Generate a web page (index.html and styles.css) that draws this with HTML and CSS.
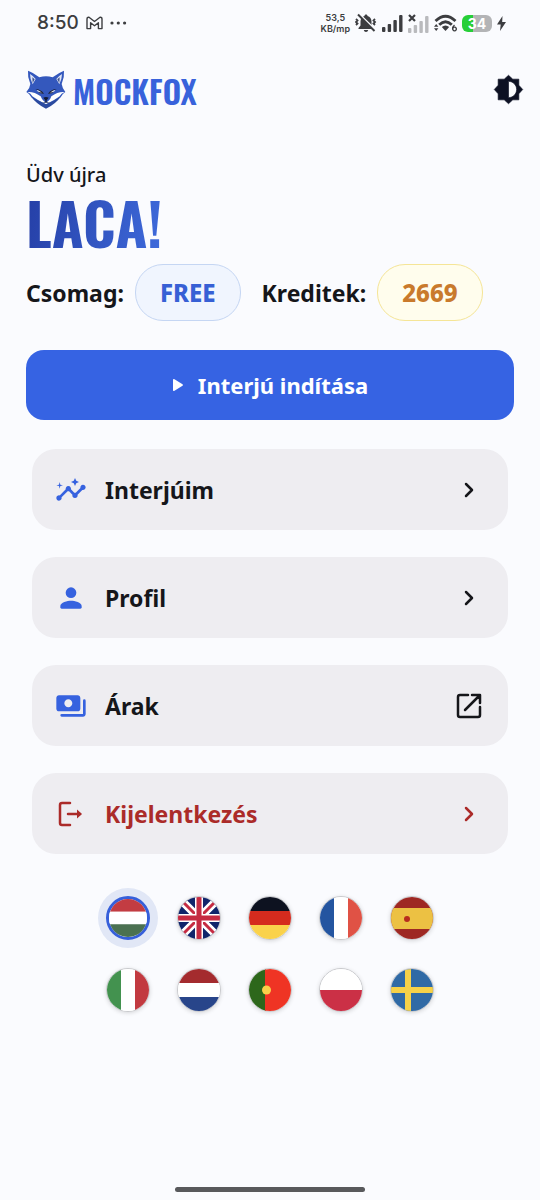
FILE: index.html
```html
<!DOCTYPE html>
<html lang="hu">
<head>
<meta charset="utf-8">
<meta name="viewport" content="width=device-width, initial-scale=1">
<title>Mockfox</title>
<link rel="stylesheet" href="styles.css">
</head>
<body>
<div class="screen">
  <div class="status">
    <div class="status-left">
      <span class="clock">8:50</span>
      <svg width="17" height="14" viewBox="0 0 17 14" fill="none" stroke="#3c3d40" stroke-width="1.4" stroke-linejoin="round"><path d="M1 12.600V3.200Q1 1 3 1.300L8.500 5.500 14 1.300Q16 1 16 3.200V12.600H12.400V6.700L8.500 9.700 4.600 6.700V12.600Z"/></svg>
      <svg width="17" height="4" viewBox="0 0 17 4" fill="#3c3d40"><circle cx="2" cy="2" r="1.600"/><circle cx="8.300" cy="2" r="1.600"/><circle cx="14.600" cy="2" r="1.600"/></svg>
    </div>
    <div class="status-right">
      <div class="speed"><span>53,5</span><span>KB/mp</span></div>
      <svg width="22" height="20" viewBox="0 0 22 20"><g fill="#3c3d40"><path d="M11 1.500c.9 0 1.500.6 1.500 1.400 2.600.8 4 2.800 4 5.600v4l2 2.600v1H3.500v-1l2-2.600v-4c0-2.800 1.400-4.800 4-5.600 0-.8.600-1.400 1.500-1.400zM8.800 17h4.400c-.3 1.300-1 2-2.200 2s-1.900-.7-2.200-2z"/></g><path d="M5 2 20.500 17" stroke="#fafbfe" stroke-width="2"/><path d="M3 1.500 19.500 18" stroke="#3c3d40" stroke-width="2"/><path d="M1 6l1.500 1.500L1 9l1.500 1.500L1 12M20 6l-1.500 1.500L20 9l-1.500 1.500L20 12" fill="none" stroke="#3c3d40" stroke-width="1.800"/></svg>
      <svg width="21" height="17" viewBox="0 0 21 17" fill="#3c3d40"><rect y="12" width="3.400" height="5" rx="1"/><rect x="5.700" y="9" width="3.400" height="8" rx="1"/><rect x="11.400" y="5" width="3.400" height="12" rx="1"/><rect x="17.100" width="3.400" height="17" rx="1"/></svg>
      <svg width="21" height="19" viewBox="0 0 21 19"><g fill="#b9babd"><rect y="14" width="3.400" height="5" rx="1"/><rect x="5.700" y="11" width="3.400" height="8" rx="1"/><rect x="11.400" y="7" width="3.400" height="12" rx="1"/><rect x="17.100" y="2" width="3.400" height="17" rx="1"/></g><path d="M1 1 7 7M7 1 1 7" stroke="#3c3d40" stroke-width="2.200"/></svg>
      <svg width="23" height="18" viewBox="0 0 23 18"><g fill="none" stroke="#3c3d40" stroke-width="2.800"><path d="M1.500 7Q11.500-2.500 21.500 7"/><path d="M5.200 10.800Q11.500 4.600 17.800 10.800"/></g><path d="M7.800 13Q11.500 9.800 15.200 13L11.500 17Z" fill="#3c3d40"/><path d="M0 12.700 2.200 10 4.400 12.700ZM0 14.300 2.200 17 4.400 14.300Z" fill="#3c3d40"/><path d="M20.500 11Q18 13.500 18.800 15.500M20.600 13.200a1.800 1.800 0 1 1-.1 0" fill="none" stroke="#3c3d40" stroke-width="1.300"/></svg>
      <span class="battery">34</span>
      <svg width="9" height="15" viewBox="0 0 9 15" fill="#3c3d40"><path d="M5.500 0 0 8.500H3.700L3 15 9 6H5.200Z"/></svg>
    </div>
  </div>

  <header class="header">
    <a class="brand" href="#">
      <svg width="40" height="39" viewBox="0 0 120 117"><path d="M6 2Q18 6 40 22Q60 16 80 22Q98 8 114 2Q116 22 107 42Q108 52 118 66Q108 72 104 82Q84 96 60 114Q34 98 16 82Q12 72 1 66Q12 54 13 42Q4 22 6 2Z" fill="#3458bd"/><path d="M12 12Q22 18 29 27L20 43Q12 28 12 12ZM108 12Q98 18 91 27L100 43Q108 28 108 12Z" fill="#dfe5f5"/><path d="M19 22 26 28 20 39ZM101 22 94 28 100 39Z" fill="#3f538f"/><path d="M4 66Q24 64 44 79Q48 90 54 94L60 99 66 94Q73 90 76 79Q96 64 116 66Q105 70 101 79Q84 92 60 103Q36 92 19 79Q15 70 4 66Z" fill="#fff"/><path d="M32 60Q44 60 52 70Q39 71 32 60ZM88 60Q76 60 68 70Q81 71 88 60Z" fill="#d9dce6"/><path d="M28 57Q44 57 54 71Q42 72 36 65L48 68Q40 60 28 57ZM92 57Q76 57 66 71Q78 72 84 65L72 68Q80 60 92 57ZM52 83Q60 79 68 83L62 91V96H58V91ZM49 98Q60 92 71 98Q60 97 49 98Z" fill="#121a36"/><path d="M16 80Q40 94 60 103Q82 94 104 80Q90 101 60 116Q30 101 16 80Z" fill="#2b4a9f"/></svg>
      <span class="brand-name">MOCKFOX</span>
    </a>
    <button class="theme" type="button" aria-label="Téma váltása"><svg width="31" height="31" viewBox="0 0 24 24" fill="#0d1123" stroke="#0d1123" stroke-width=".5" stroke-linejoin="round"><path fill-rule="evenodd" d="M20 15.310 23 12 20 8.690V4h-4.690L12 1 8.690 4H4v4.690L1 12 4 15.310V20h4.690L12 23 15.310 20H20ZM12 18.300V5.700c3.600 0 6.300 2.900 6.300 6.300s-2.700 6.300-6.300 6.300z"/></svg></button>
  </header>

  <main class="main">
    <p class="hello">Üdv újra</p>
    <h1 class="name">LACA!</h1>
    <div class="stats">
      <div class="stat"><span>Csomag:</span><span class="pill plan">FREE</span></div>
      <div class="stat"><span>Kreditek:</span><span class="pill credits">2669</span></div>
    </div>
    <button class="start" type="button"><svg width="12" height="14" viewBox="0 0 12 14" fill="#fff"><path d="M1 2Q1 .5 2.500 1.300L10.500 6.200Q11.500 7 10.500 7.800L2.500 12.700Q1 13.500 1 12Z"/></svg>Interjú indítása</button>
    <nav class="menu">
      <a class="card" href="#">
        <svg class="icon accent" viewBox="0 0 24 24"><path d="M21 8c-1.450 0-2.260 1.440-1.930 2.510l-3.550 3.560c-.3-.09-.74-.09-1.040 0l-2.550-2.550C12.270 10.450 11.460 9 10 9c-1.450 0-2.270 1.440-1.930 2.520l-4.560 4.550C2.440 15.740 1 16.550 1 18c0 1.100.9 2 2 2 1.450 0 2.260-1.440 1.930-2.510l4.550-4.560c.3.09.74.09 1.040 0l2.550 2.550C12.730 16.550 13.540 18 15 18c1.450 0 2.270-1.440 1.930-2.520l3.560-3.550c1.070.33 2.510-.48 2.510-1.930 0-1.100-.9-2-2-2zM15 9l.94-2.070L18 6l-2.060-.93L15 3l-.92 2.070L12 6l2.080.93zM3.500 11 4 9l2-.5L4 8l-.5-2L3 8l-2 .5L3 9z"/></svg>
        <span class="label">Interjúim</span>
        <svg class="icon line" viewBox="0 0 32 32"><path d="M13 10 19 16 13 22"/></svg>
      </a>
      <a class="card" href="#">
        <svg class="icon accent" viewBox="0 0 24 24"><circle cx="12" cy="8" r="4"/><path d="M12 14c-2.670 0-8 1.340-8 4v1q0 1 1 1H19q1 0 1-1V18c0-2.660-5.330-4-8-4z"/></svg>
        <span class="label">Profil</span>
        <svg class="icon line" viewBox="0 0 32 32"><path d="M13 10 19 16 13 22"/></svg>
      </a>
      <a class="card" href="#">
        <svg class="icon accent" viewBox="0 0 24 24"><path d="M19 14V6c0-1.100-.9-2-2-2H3c-1.100 0-2 .9-2 2v8c0 1.100.9 2 2 2h14c1.100 0 2-.9 2-2zm-9-1c-1.660 0-3-1.340-3-3s1.340-3 3-3 3 1.340 3 3-1.340 3-3 3zm13-5v10c0 1.100-.9 2-2 2H5q-1 0-1-1t1-1H21V8q0-1 1-1t1 1z"/></svg>
        <span class="label">Árak</span>
        <svg class="icon line" viewBox="0 0 32 32"><path d="M15 5H7Q5 5 5 7V25Q5 27 7 27H25Q27 27 27 25V17M19 5H27V13M26 6 12 20"/></svg>
      </a>
      <a class="card danger" href="#">
        <svg class="icon line" viewBox="0 0 32 32"><path d="M15 5H7Q5 5 5 7V25Q5 27 7 27H15M13 16H25"/><path d="M22 11.500 27 16 22 20.500Z" fill="currentColor" stroke="none"/></svg>
        <span class="label">Kijelentkezés</span>
        <svg class="icon line" viewBox="0 0 32 32"><path d="M13 10 19 16 13 22"/></svg>
      </a>
    </nav>
    <div class="flags">
      <button class="flag selected" type="button" aria-label="Magyar"><svg viewBox="0 0 42 42"><path fill="#c33c42" d="M0 0H42V14H0Z"/><path fill="#fff" d="M0 14H42V28H0Z"/><path fill="#4b7151" d="M0 28H42V42H0Z"/></svg></button>
      <button class="flag" type="button" aria-label="English"><svg viewBox="0 0 42 42"><path fill="#10256b" d="M0 0H42V42H0Z"/><path d="M0 0 42 42M42 0 0 42" stroke="#fff" stroke-width="8"/><path d="M0 0 42 42M42 0 0 42" stroke="#c52b42" stroke-width="3"/><path d="M21 0V42M0 21H42" stroke="#fff" stroke-width="8"/><path d="M21 0V42M0 21H42" stroke="#c52b42" stroke-width="5"/></svg></button>
      <button class="flag" type="button" aria-label="Deutsch"><svg viewBox="0 0 42 42"><path fill="#0d1220" d="M0 0H42V14H0Z"/><path fill="#d52b1e" d="M0 14H42V28H0Z"/><path fill="#fad24b" d="M0 28H42V42H0Z"/></svg></button>
      <button class="flag" type="button" aria-label="Français"><svg viewBox="0 0 42 42"><path fill="#2455a0" d="M0 0H14V42H0Z"/><path fill="#fff" d="M14 0H28V42H14Z"/><path fill="#e05245" d="M28 0H42V42H28Z"/></svg></button>
      <button class="flag" type="button" aria-label="Español"><svg viewBox="0 0 42 42"><path fill="#9e2823" d="M0 0H42V42H0Z"/><path fill="#ecc143" d="M0 11H42V32H0Z"/><circle cx="16" cy="22" r="3" fill="#b72d1e"/></svg></button>
      <button class="flag" type="button" aria-label="Italiano"><svg viewBox="0 0 42 42"><path fill="#43924f" d="M0 0H14V42H0Z"/><path fill="#fff" d="M14 0H28V42H14Z"/><path fill="#c23a40" d="M28 0H42V42H28Z"/></svg></button>
      <button class="flag" type="button" aria-label="Nederlands"><svg viewBox="0 0 42 42"><path fill="#a42b2e" d="M0 0H42V14H0Z"/><path fill="#fff" d="M0 14H42V28H0Z"/><path fill="#28458a" d="M0 28H42V42H0Z"/></svg></button>
      <button class="flag" type="button" aria-label="Português"><svg viewBox="0 0 42 42"><path fill="#2d671b" d="M0 0H17V42H0Z"/><path fill="#ef3424" d="M16 0H42V42H16Z"/><circle cx="17.500" cy="21" r="4.500" fill="#f9d14a"/></svg></button>
      <button class="flag" type="button" aria-label="Polski"><svg viewBox="0 0 42 42"><path fill="#fff" d="M0 0H42V21H0Z"/><path fill="#cb3046" d="M0 21H42V42H0Z"/></svg></button>
      <button class="flag" type="button" aria-label="Svenska"><svg viewBox="0 0 42 42"><path fill="#306aa5" d="M0 0H42V42H0Z"/><path d="M17 0V42M0 21H42" stroke="#f6d148" stroke-width="6"/></svg></button>
    </div>
  </main>
  <div class="gesture"></div>
</div>
</body>
</html>
```
FILE: styles.css
```css
* { box-sizing: border-box; }
body {
  margin: 0;
  background: #fafbfe;
  color: #15161a;
  font-family: "Noto Sans", sans-serif;
}
svg { display: block; flex: none; }
button { padding: 0; border: 0; background: none; font: inherit; color: inherit; cursor: pointer; }
a { color: inherit; text-decoration: none; }
.screen { min-height: 100vh; display: flex; flex-direction: column; }

.status {
  display: flex;
  justify-content: space-between;
  align-items: center;
  height: 46px;
  padding: 0 34px 0 37px;
  color: #3c3d40;
}
.status-left { display: flex; align-items: center; gap: 7px; }
.clock { font: 500 19px/24px Inter, sans-serif; }
.status-right { display: flex; align-items: center; gap: 5px; }
.speed { display: flex; flex-direction: column; align-items: center; font: 600 9px/11px Inter, sans-serif; }
.battery {
  width: 30px;
  border-radius: 6px;
  background: linear-gradient(90deg, #27cf38 36%, #b3b4b6 36%);
  color: #fff;
  font: 700 14px/17px Inter, sans-serif;
  text-align: center;
}

.header {
  display: flex;
  justify-content: space-between;
  align-items: center;
  height: 86px;
  padding: 0 16px 0 26px;
}
.brand { display: flex; align-items: center; gap: 7px; }
.brand-name {
  padding-top: 4px;
  color: #3862db;
  font: 600 32px/40px Oswald, "Liberation Sans Narrow", sans-serif;
}

.main { padding: 30px 26px; }
.hello { margin: 0; font-size: 20px; font-weight: 500; line-height: 26px; }
.name {
  width: fit-content;
  margin: 0;
  background: linear-gradient(100deg, #253fa6, #3e6adb);
  background-clip: text;
  color: transparent;
  font: 700 58px/68px Oswald, "Liberation Sans Narrow", sans-serif;
}
.stats { display: flex; gap: 21px; margin-top: 8px; font-size: 23px; font-weight: 700; }
.stat { display: flex; align-items: center; gap: 11px; }
.pill {
  padding: 0 24px;
  border: 1px solid;
  border-radius: 28px;
  font-size: 24px;
  font-weight: 800;
  line-height: 55px;
}
.plan { border-color: #c5d6f3; background: #f0f5fe; color: #3760d5; }
.credits { border-color: #f5e597; background: #fffded; color: #c97a2c; }

.start {
  display: flex;
  justify-content: center;
  align-items: center;
  gap: 14px;
  width: 100%;
  height: 70px;
  margin-top: 29px;
  border-radius: 18px;
  background: #3663e3;
  color: #fff;
  font-size: 22px;
  font-weight: 700;
}

.menu { display: flex; flex-direction: column; gap: 27px; margin: 29px 6px 0; }
.card {
  display: flex;
  align-items: center;
  gap: 18px;
  height: 81px;
  padding: 0 23px;
  border-radius: 24px;
  background: #eeedf1;
  font-size: 23px;
  font-weight: 700;
}
.label { flex: 1; }
.icon { width: 32px; height: 32px; }
.accent { fill: #3662df; }
.line { fill: none; stroke: currentColor; stroke-width: 2.5px; stroke-linecap: round; stroke-linejoin: round; }
.danger { color: #ab2b29; }

.flags {
  display: grid;
  grid-template-columns: repeat(5, 44px);
  justify-content: center;
  gap: 28px 27px;
  margin-top: 42px;
}
.flag {
  height: 44px;
  overflow: hidden;
  border: 1px solid #c9cacd;
  border-radius: 50%;
  box-shadow: 0 1px 4px #00000026;
}
.flag svg { width: 100%; height: 100%; }
.selected { border: 3px solid #365fda; box-shadow: 0 0 0 8px #e1e7f6; }

.gesture { width: 190px; height: 5px; margin: auto auto 8px; border-radius: 3px; background: #58595c; }
```
